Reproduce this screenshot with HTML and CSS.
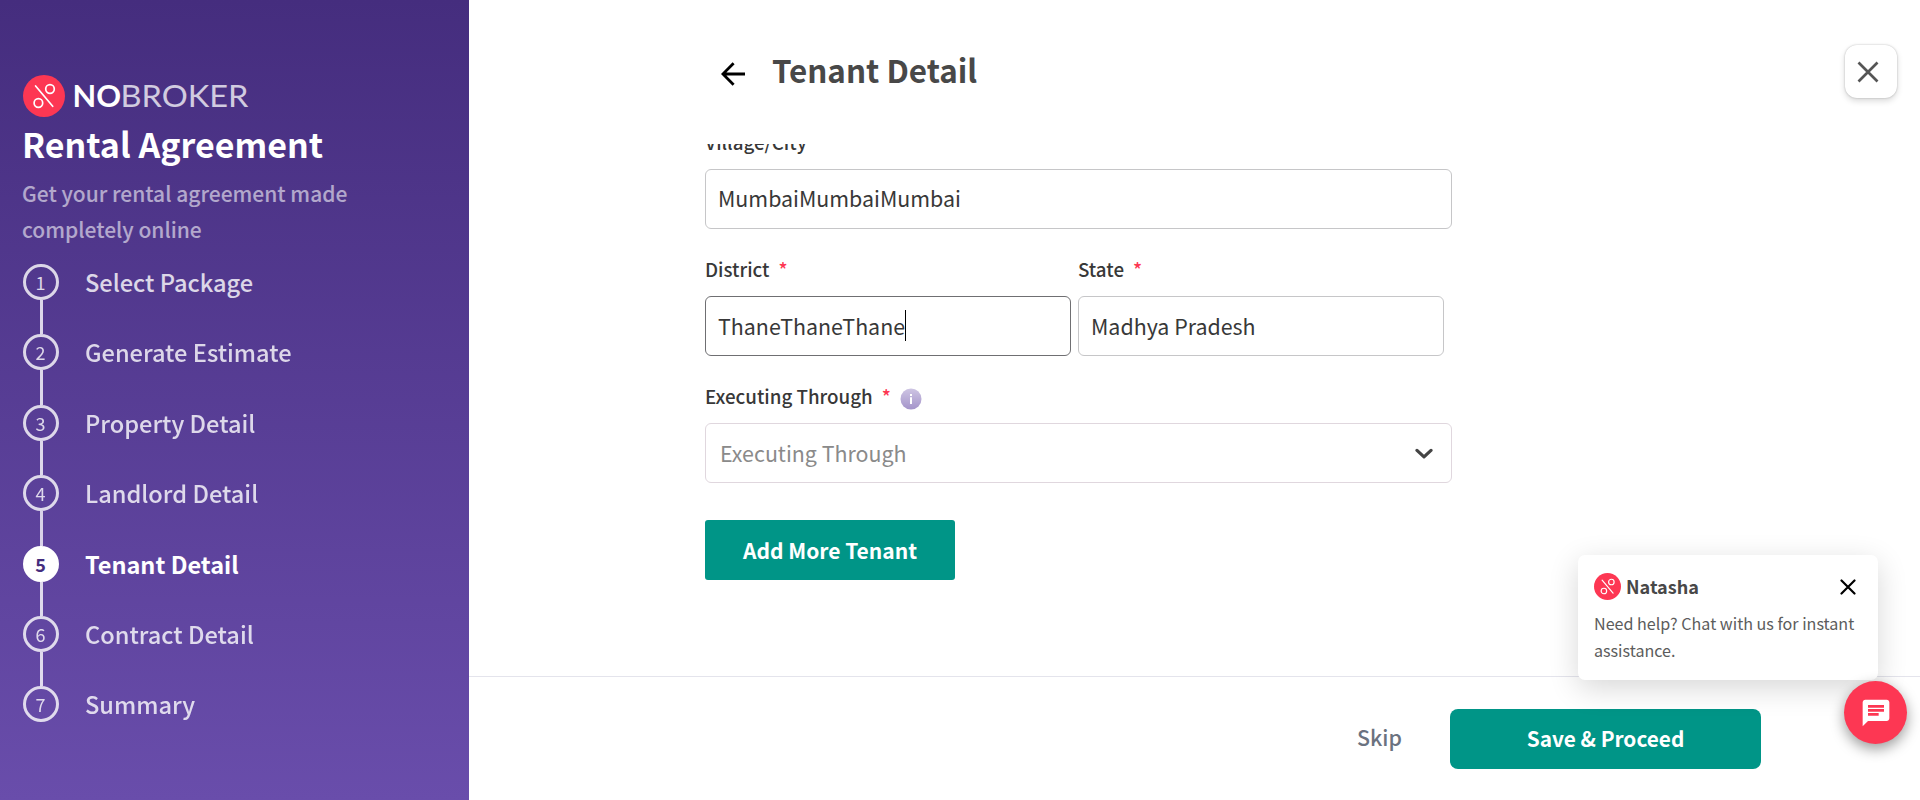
FILE: index.html
```html
<!DOCTYPE html>
<html lang="en">
<head>
<meta charset="utf-8">
<title>Rental Agreement</title>
<link rel="stylesheet" href="styles.css">
</head>
<body>
<div class="app">
  <aside class="sidebar">
    <svg class="logo" width="226" height="42" viewBox="0 0 226 42">
      <circle cx="21" cy="21" r="21" fill="#fd3753"/>
      <g fill="none" stroke="#fff" stroke-width="1.7" stroke-linecap="round">
        <path d="M12.6 11 L29.7 31.3"/>
        <circle cx="27" cy="14" r="4.3"/>
        <circle cx="15.4" cy="28" r="4.3"/>
      </g>
      <text class="logo-bold" x="49.5" y="32" textLength="48.5" lengthAdjust="spacingAndGlyphs">NO</text>
      <text class="logo-light" x="97.5" y="32" textLength="128" lengthAdjust="spacingAndGlyphs">BROKER</text>
    </svg>
    <h1 class="product">Rental Agreement</h1>
    <p class="tagline">Get your rental agreement made<br>completely online</p>
    <ol class="steps">
      <li class="step"><span class="num">1</span><span class="name">Select Package</span></li>
      <li class="step"><span class="num">2</span><span class="name">Generate Estimate</span></li>
      <li class="step"><span class="num">3</span><span class="name">Property Detail</span></li>
      <li class="step"><span class="num">4</span><span class="name">Landlord Detail</span></li>
      <li class="step active"><span class="num">5</span><span class="name">Tenant Detail</span></li>
      <li class="step"><span class="num">6</span><span class="name">Contract Detail</span></li>
      <li class="step"><span class="num">7</span><span class="name">Summary</span></li>
    </ol>
  </aside>

  <main class="main">
    <header class="header">
      <svg class="back" width="24" height="24" viewBox="0 0 24 24" fill="none" stroke="#000" stroke-width="2.8">
        <path d="M2 12H24M12.6 1.2L1.9 12L12.6 22.8"/>
      </svg>
      <h2 class="title">Tenant Detail</h2>
      <button class="close" aria-label="Close">
        <svg width="22" height="22" viewBox="0 0 22 22" fill="none" stroke="#555" stroke-width="2.7"><path d="M1.5 1.5L20.5 20.5M20.5 1.5L1.5 20.5"/></svg>
      </button>
    </header>

    <section class="form">
      <div class="field">
        <label class="label">Village/City</label>
        <div class="input raised">MumbaiMumbaiMumbai</div>
      </div>
      <div class="row">
        <div class="field">
          <label class="label">District<span class="req">*</span></label>
          <div class="input focused">ThaneThaneThane<span class="caret"></span></div>
        </div>
        <div class="field">
          <label class="label">State<span class="req">*</span></label>
          <div class="input">Madhya Pradesh</div>
        </div>
      </div>
      <div class="field">
        <label class="label">Executing Through<span class="req">*</span>
          <svg class="info" width="22" height="22" viewBox="0 0 22 22">
            <defs><linearGradient id="tint" x1="0" y1="0" x2="0" y2="1"><stop offset="0" stop-color="#cec5e3"/><stop offset="1" stop-color="#a494ca"/></linearGradient></defs>
            <circle cx="11" cy="11" r="10.5" fill="url(#tint)"/>
            <path fill="#fff" d="M10 6h2v2h-2zM10 9.3h2v6.7h-2z"/>
          </svg>
        </label>
        <div class="input select"><span>Executing Through</span>
          <svg class="chevron" width="18" height="12" viewBox="0 0 18 12" fill="none" stroke="#444" stroke-width="3.2" stroke-linecap="round" stroke-linejoin="round"><path d="M2 2.4L9 8.9L16 2.4"/></svg>
        </div>
      </div>
      <button class="add">Add More Tenant</button>
    </section>

    <footer class="footer">
      <button class="skip">Skip</button>
      <button class="save">Save &amp; Proceed</button>
    </footer>
  </main>
</div>

<div class="chat">
  <div class="chat-head">
    <svg width="27" height="27" viewBox="0 0 42 42">
      <circle cx="21" cy="21" r="21" fill="#fd3753"/>
      <g fill="none" stroke="#fff" stroke-width="1.8" stroke-linecap="round">
        <path d="M12.6 11 L29.7 31.3"/><circle cx="27" cy="14" r="4.3"/><circle cx="15.4" cy="28" r="4.3"/>
      </g>
    </svg>
    <span class="agent">Natasha</span>
    <svg class="chat-close" width="16" height="16" viewBox="0 0 16 16" fill="none" stroke="#000" stroke-width="2.2" stroke-linecap="round"><path d="M1.5 1.5L14.5 14.5M14.5 1.5L1.5 14.5"/></svg>
  </div>
  <p class="chat-text">Need help? Chat with us for instant<br>assistance.</p>
</div>
<button class="fab" aria-label="Chat">
  <svg width="32" height="32" viewBox="0 0 24 24" fill="#fff"><path d="M20 2H4c-1.1 0-2 .9-2 2v18l4-4h14c1.1 0 2-.9 2-2V4c0-1.1-.9-2-2-2zM6 6h12v2H6zM6 9h12v2H6zM6 12h8v2H6z" fill-rule="evenodd"/></svg>
</button>
</body>
</html>
```
FILE: styles.css
```css
* { box-sizing: border-box; }
body {
  margin: 0;
  overflow: hidden;
  background: #fff;
  color: #383838;
  font-family: "Noto Sans CJK SC", "Noto Sans", sans-serif;
}
h1, h2, p, ol { margin: 0; padding: 0; }
button { border: 0; padding: 0; font-family: inherit; display: flex; align-items: center; justify-content: center; }
svg { display: block; flex: none; }

.app { display: flex; height: 800px; }

.sidebar {
  width: 469px;
  flex: none;
  padding: 75px 0 0 23px;
  color: #fff;
  background: linear-gradient(#452d7e, #694dab);
}
.logo-bold { font: 700 31px Lato, sans-serif; fill: #fff; }
.logo-light { font: 400 31px Lato, sans-serif; fill: rgba(255, 255, 255, .75); }
.product { margin: 3px 0 0 -1px; line-height: 48px; font-size: 34px; font-weight: 700; }
.tagline { margin: 7px 0 0 -1px; line-height: 36px; font-size: 21px; font-weight: 500; opacity: .57; }
.steps { list-style: none; margin-top: 17px; }
.step { display: flex; align-items: center; gap: 26px; height: 36px; opacity: .8; }
.step + .step { margin-top: 34.4px; }
.num {
  position: relative;
  width: 36px;
  height: 36px;
  border: 3px solid #fff;
  border-radius: 50%;
  line-height: 30px;
  text-align: center;
  font-size: 18px;
  padding-right: 1px;
}
.step + .step .num::before {
  content: "";
  position: absolute;
  left: 13.5px;
  bottom: 33px;
  width: 3px;
  height: 34.4px;
  background: #fff;
}
.name { font-size: 23.6px; font-weight: 500; line-height: 34px; }
.step.active { opacity: 1; font-weight: 700; }
.active .name { font-size: 23.5px; font-weight: 700; }
.active .num { background: #fff; color: #452d7e; }
.step.active .num::before { background: #d9d2e8; }

.main { flex: 1; display: flex; flex-direction: column; min-width: 0; }
.header { height: 144px; display: flex; align-items: flex-start; padding: 45px 23px 0 252px; }
.back { margin-top: 17px; }
.title { margin-left: 27px; line-height: 50px; font-size: 31.4px; font-weight: 700; color: #484848; }
.close {
  margin-left: auto;
  width: 52px;
  height: 53px;
  padding-right: 6px;
  border-radius: 12px;
  background: #fff;
  box-shadow: 0 0 2px rgba(0, 0, 0, .25), 0 3px 6px rgba(0, 0, 0, .15);
}

.form { height: 532px; overflow: hidden; padding-left: 236px; }
.form > .field:first-child { margin-top: -17px; }
.field, .row { width: 747px; }
.row { display: flex; gap: 7px; }
.row .field { width: 366px; }
.field + .row, .row + .field { margin-top: 25px; }
.label { display: flex; align-items: center; height: 30px; font-size: 18.75px; font-weight: 500; line-height: 30px; margin-bottom: 12px; }
.req { color: #fd3753; margin-left: 9px; }
.info { margin: 6px 0 0 9px; }
.input {
  height: 60px;
  border: 1px solid #c6c6c8;
  border-radius: 6px;
  display: flex;
  align-items: center;
  padding: 0 13px 1px 12px;
  font-size: 21.4px;
  line-height: 30px;
}
.raised { padding-bottom: 2px; }
.focused { border-color: #6f6f72; }
.caret { width: 1px; height: 31px; background: #000; }
.select { justify-content: space-between; border-color: #e0d7de; color: #8a8a8a; padding: 0 18px 1px 14px; }
.chevron { margin-top: 3px; }
.add { margin-top: 37px; padding-bottom: 1px; width: 250px; height: 60px; border-radius: 3px; background: #009587; color: #fff; font-size: 21px; font-weight: 700; }

.footer { flex: 1; border-top: 1px solid #e4e4ec; display: flex; justify-content: flex-end; padding: 32px 159px 0 0; }
.skip { height: 54px; background: none; color: #6b7280; font-size: 21.4px; font-weight: 500; margin-right: 48px; }
.save { width: 311px; height: 60px; padding-bottom: 3px; border-radius: 8px; background: #009587; color: #fff; font-size: 20.8px; font-weight: 700; }

.chat {
  position: absolute;
  left: 1578px;
  top: 555px;
  width: 300px;
  height: 125px;
  padding: 18px 22px 0 16px;
  border-radius: 7px;
  background: #fff;
  box-shadow: 0 8px 30px rgba(0, 0, 0, .16);
}
.chat-head { display: flex; align-items: center; height: 27px; color: #484848; }
.agent { margin-left: 5px; font-size: 18.1px; font-weight: 700; line-height: 27px; }
.chat-close { margin-left: auto; }
.chat-text { margin-top: 10px; font-size: 16.1px; line-height: 27px; color: #5c5c5c; white-space: nowrap; }
.fab {
  position: absolute;
  left: 1844px;
  top: 681px;
  width: 63px;
  height: 63px;
  border-radius: 50%;
  background: #fd3753;
  box-shadow: 0 5px 14px rgba(0, 0, 0, .4);
}
```
